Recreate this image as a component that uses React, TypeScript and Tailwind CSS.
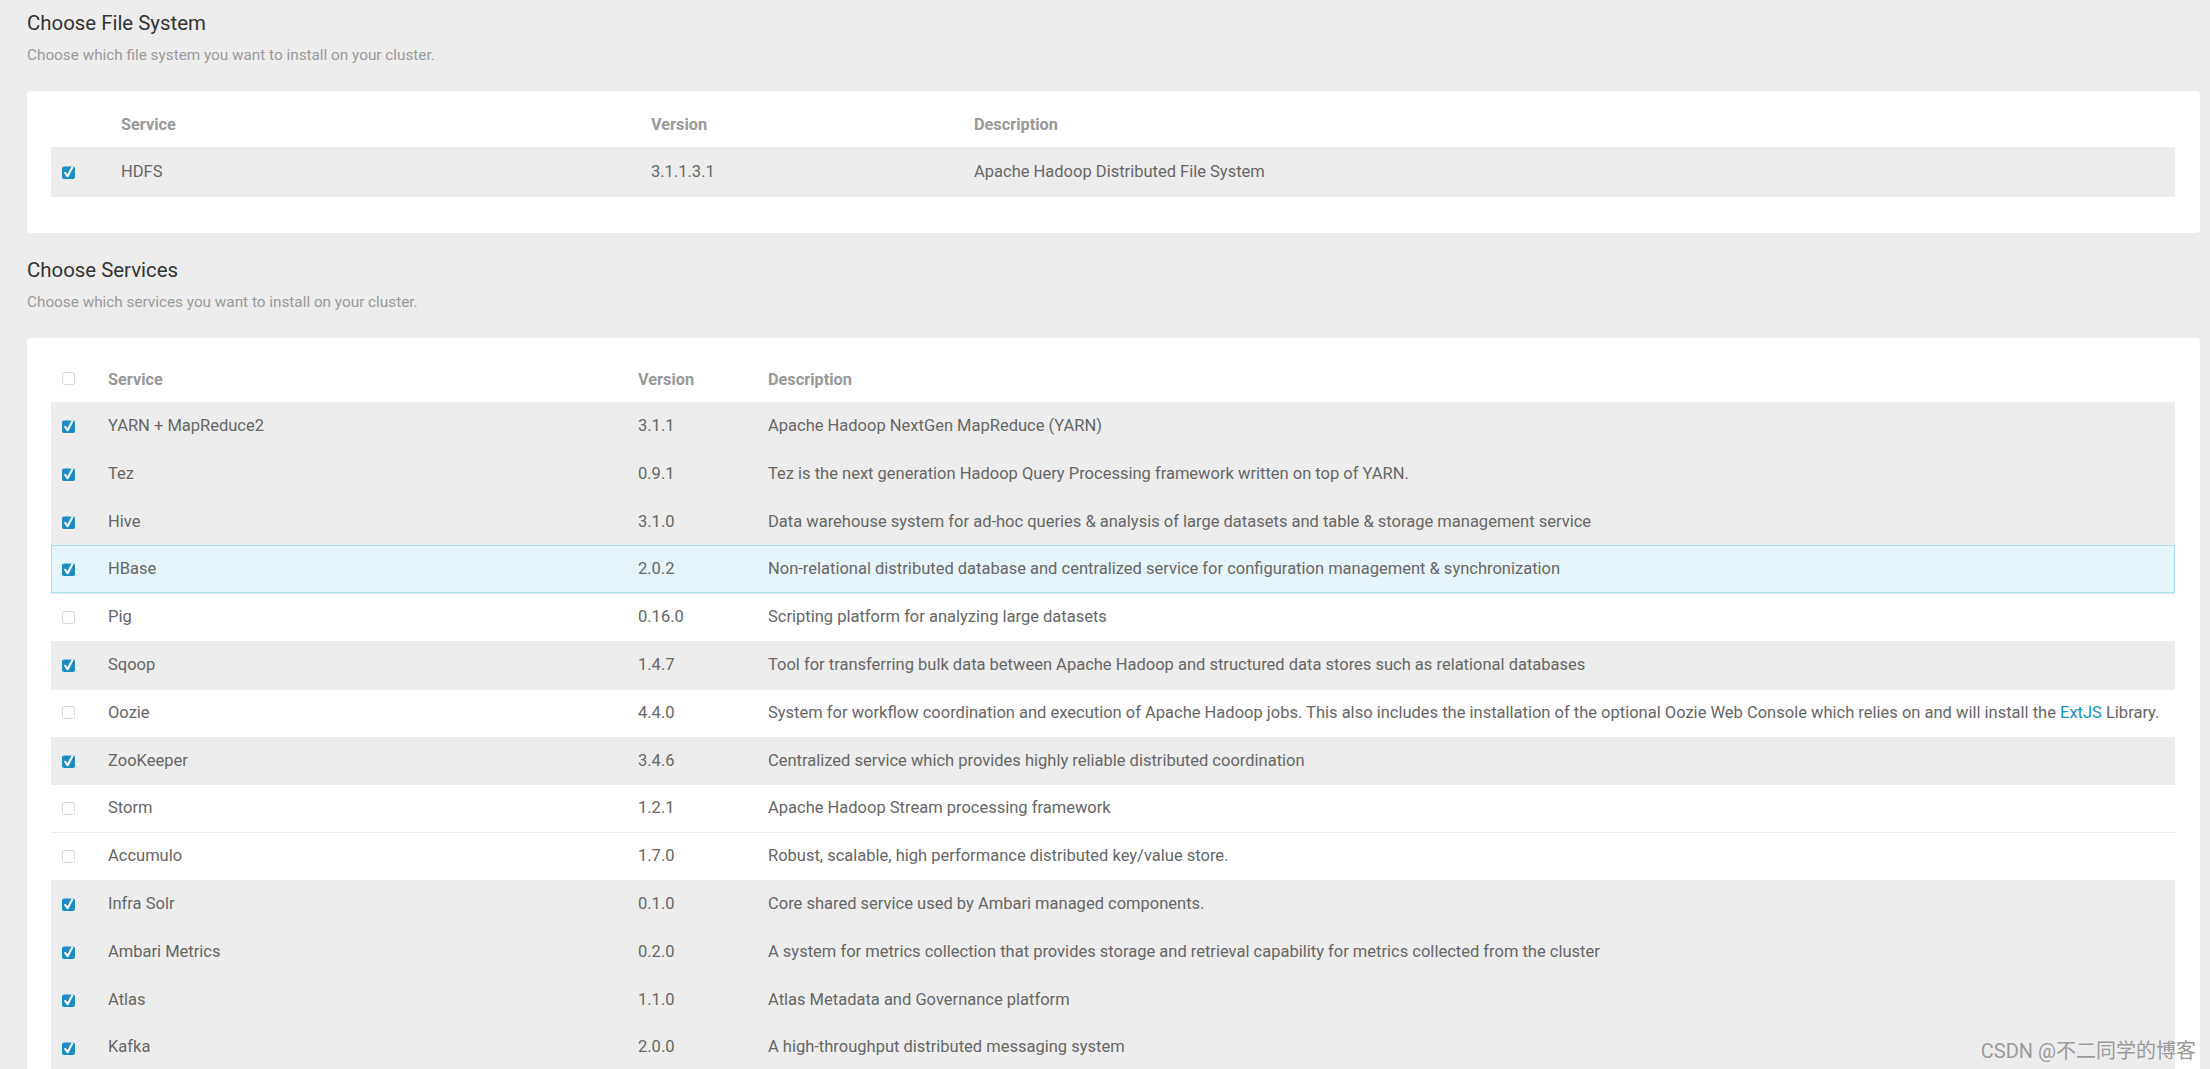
import React from "react";

type Row = {
  name: string;
  version: string;
  desc: React.ReactNode;
  checked: boolean;
  hover?: boolean;
};

const services: Row[] = [
  { name: "YARN + MapReduce2", version: "3.1.1", desc: "Apache Hadoop NextGen MapReduce (YARN)", checked: true },
  { name: "Tez", version: "0.9.1", desc: "Tez is the next generation Hadoop Query Processing framework written on top of YARN.", checked: true },
  { name: "Hive", version: "3.1.0", desc: "Data warehouse system for ad-hoc queries & analysis of large datasets and table & storage management service", checked: true },
  { name: "HBase", version: "2.0.2", desc: "Non-relational distributed database and centralized service for configuration management & synchronization", checked: true, hover: true },
  { name: "Pig", version: "0.16.0", desc: "Scripting platform for analyzing large datasets", checked: false },
  { name: "Sqoop", version: "1.4.7", desc: "Tool for transferring bulk data between Apache Hadoop and structured data stores such as relational databases", checked: true },
  {
    name: "Oozie",
    version: "4.4.0",
    desc: (
      <>
        System for workflow coordination and execution of Apache Hadoop jobs. This also includes the installation of the optional Oozie Web Console which relies on and will install the{" "}
        <span className="text-[#1491c1]">ExtJS</span> Library.
      </>
    ),
    checked: false,
  },
  { name: "ZooKeeper", version: "3.4.6", desc: "Centralized service which provides highly reliable distributed coordination", checked: true },
  { name: "Storm", version: "1.2.1", desc: "Apache Hadoop Stream processing framework", checked: false },
  { name: "Accumulo", version: "1.7.0", desc: "Robust, scalable, high performance distributed key/value store.", checked: false },
  { name: "Infra Solr", version: "0.1.0", desc: "Core shared service used by Ambari managed components.", checked: true },
  { name: "Ambari Metrics", version: "0.2.0", desc: "A system for metrics collection that provides storage and retrieval capability for metrics collected from the cluster", checked: true },
  { name: "Atlas", version: "1.1.0", desc: "Atlas Metadata and Governance platform", checked: true },
  { name: "Kafka", version: "2.0.0", desc: "A high-throughput distributed messaging system", checked: true },
];

function Checkbox({ checked }: { checked: boolean }) {
  if (checked) {
    return (
      <svg width="13" height="14" viewBox="0 0 13 14" className="block">
        <rect x="0" y="1.5" width="13" height="12.5" rx="2" fill="#1a8cc4" />
        <path d="M3.2 7.8 L5.6 11.2 L10.2 2.4" stroke="#ffffff" strokeWidth="2.1" fill="none" strokeLinecap="round" strokeLinejoin="round" />
      </svg>
    );
  }
  return (
    <svg width="13" height="14" viewBox="0 0 13 14" className="block">
      <rect x="0.5" y="0.5" width="12" height="12" rx="2" fill="#ffffff" stroke="#d6d6d6" strokeWidth="1" />
    </svg>
  );
}

export default function App() {
  return (
    <div
      className="relative h-[1069px] overflow-hidden bg-[#ededed] pl-[27px] pr-[10px]"
      style={{ fontFamily: "Roboto, 'Noto Sans', sans-serif" }}
    >
      {/* Choose File System */}
      <div className="pt-[11px]">
        <h2 className="text-[20.4px] leading-[24px] text-[#333333] font-normal">Choose File System</h2>
        <p className="mt-[11px] text-[15.3px] leading-[18px] text-[#999999]">
          Choose which file system you want to install on your cluster.
        </p>
      </div>
      <div className="mt-[27px] h-[142px] rounded-[4px] bg-white pl-[24px] pr-[25px] pt-[12px]">
        <div className="grid h-[44px] grid-cols-[70px_530px_323px_1fr] items-center text-[16.3px] font-bold text-[#999999]">
          <div />
          <div>Service</div>
          <div>Version</div>
          <div>Description</div>
        </div>
        <div className="grid h-[50px] grid-cols-[70px_530px_323px_1fr] items-center bg-[#ededed] text-[16.5px] text-[#666666]">
          <div className="pl-[11px]">
            <Checkbox checked />
          </div>
          <div>HDFS</div>
          <div>3.1.1.3.1</div>
          <div>Apache Hadoop Distributed File System</div>
        </div>
      </div>

      {/* Choose Services */}
      <div className="pt-[25px]">
        <h2 className="text-[20.4px] leading-[24px] text-[#333333] font-normal">Choose Services</h2>
        <p className="mt-[11px] text-[15.3px] leading-[18px] text-[#999999]">
          Choose which services you want to install on your cluster.
        </p>
      </div>
      <div className="mt-[27px] rounded-[4px] bg-white pl-[24px] pr-[25px] pt-[20px]">
        <div className="grid h-[44px] grid-cols-[57px_530px_130px_1fr] items-center text-[16.3px] font-bold text-[#999999]">
          <div className="pl-[11px] -mt-[3px]">
            <Checkbox checked={false} />
          </div>
          <div>Service</div>
          <div>Version</div>
          <div>Description</div>
        </div>
        {services.map((s) => (
          <div
            key={s.name}
            className={
              s.hover
                ? "grid h-[47.8px] grid-cols-[57px_530px_130px_1fr] items-center border border-[#a8def2] bg-[#e6f5fc] text-[16.5px] text-[#666666]"
                : s.checked
                ? "grid h-[47.8px] grid-cols-[57px_530px_130px_1fr] items-center border-t border-[#ededed] bg-[#ededed] text-[16.5px] text-[#666666]"
                : "grid h-[47.8px] grid-cols-[57px_530px_130px_1fr] items-center border-t border-[#ebebeb] bg-white text-[16.5px] text-[#666666]"
            }
          >
            <div className={s.hover ? "pl-[10px]" : "pl-[11px]"}>
              <Checkbox checked={s.checked} />
            </div>
            <div className={s.hover ? "-ml-[1px]" : ""}>{s.name}</div>
            <div className={s.hover ? "-ml-[1px]" : ""}>{s.version}</div>
            <div className={s.hover ? "-ml-[1px] whitespace-nowrap" : "whitespace-nowrap"}>{s.desc}</div>
          </div>
        ))}
      </div>

      {/* watermark */}
      <div
        className="absolute bottom-[6px] right-[14px] text-[20px] leading-[24px] text-[#9a9a9a]"
        style={{ fontFamily: "Roboto, 'Noto Sans CJK SC', sans-serif" }}
      >
        CSDN @不二同学的博客
      </div>
    </div>
  );
}
